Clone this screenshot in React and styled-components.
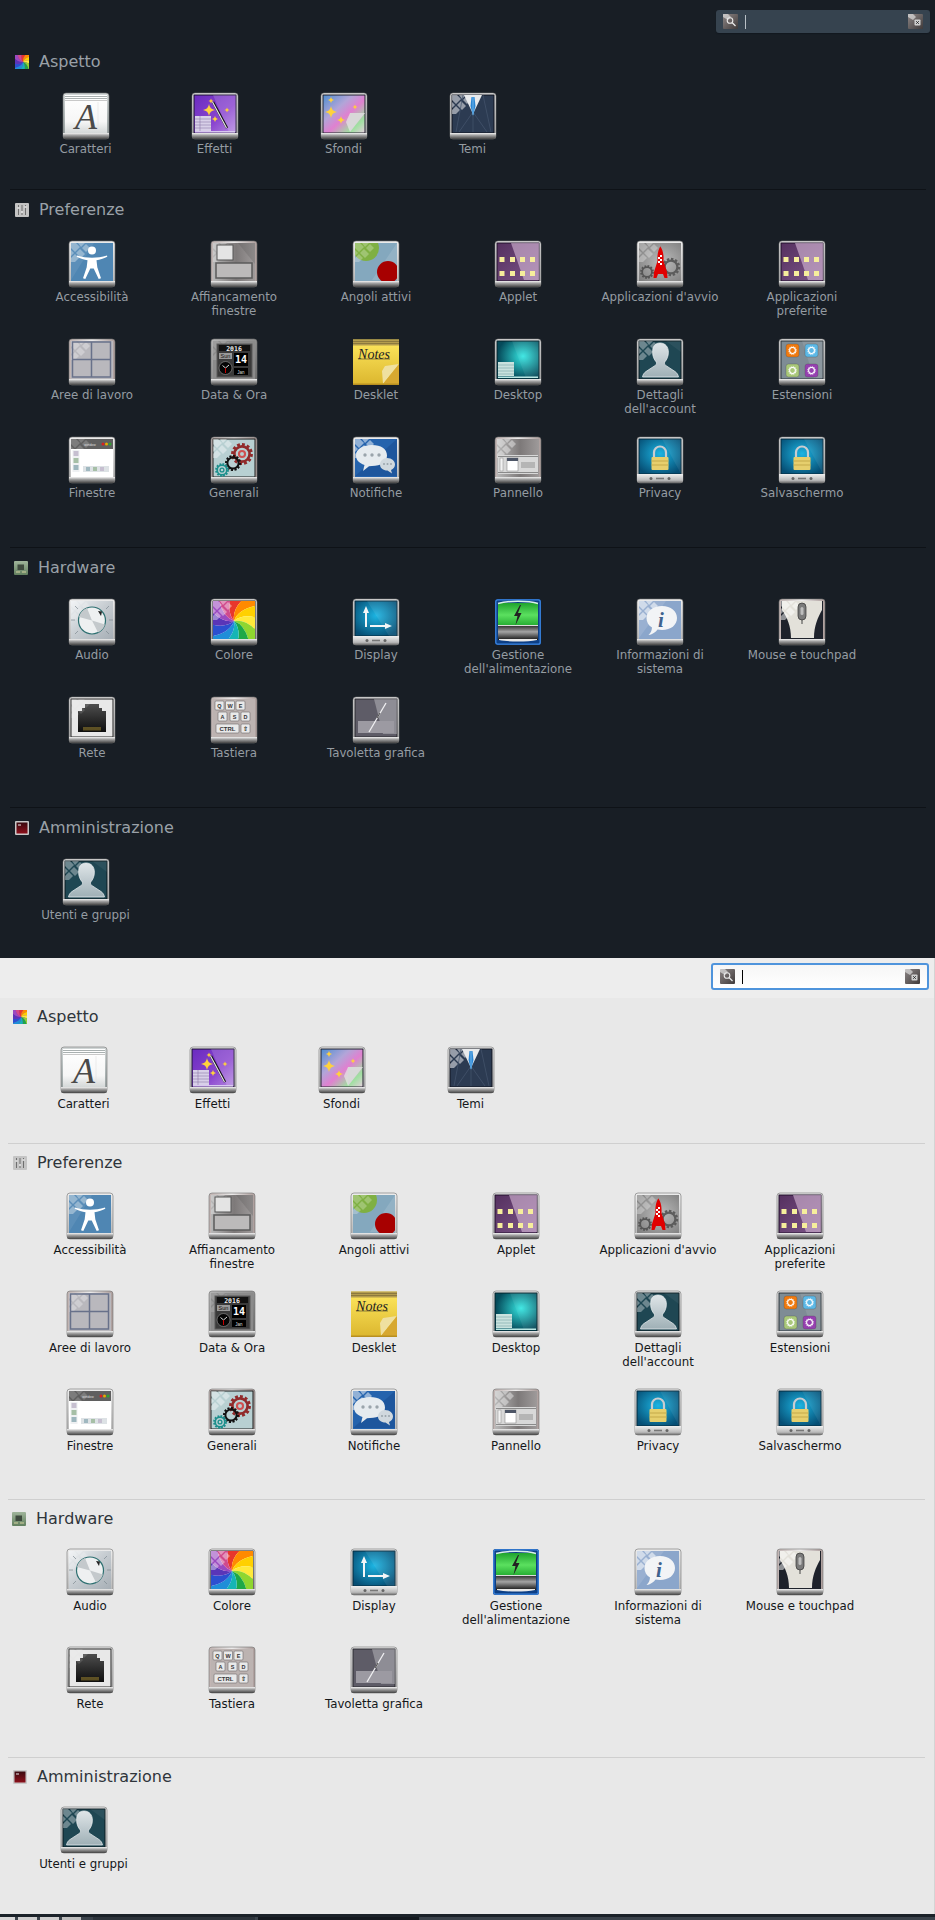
import React from 'react';
import styled, { createGlobalStyle } from 'styled-components';

const Global = createGlobalStyle`
  html, body { margin: 0; padding: 0; background: #e8e8e8; }
  body { font-family: "DejaVu Sans", sans-serif; }
`;

const Page = styled.div`
  width: 935px;
  height: 1920px;
  display: flex;
  flex-direction: column;
  overflow: hidden;
`;
const HiddenDefs = styled.svg`
  display: block;
  width: 0;
  height: 0;
`;
const Win = styled.section`
  height: ${p => p.$h}px;
  flex: none;
  display: flex;
  flex-direction: column;
  box-sizing: border-box;
  background: ${p => (p.$dark ? '#181e25' : '#e8e8e8')};
  border-right: ${p => (p.$dark ? 'none' : '1px solid #d4d4d4')};
`;
const Toolbar = styled.div`
  height: ${p => (p.$dark ? 42 : 40)}px;
  box-sizing: border-box;
  flex: none;
  display: flex;
  justify-content: flex-end;
  align-items: flex-start;
  padding: ${p => (p.$dark ? '10px 5px 0 0' : '5px 5px 0 0')};
  background: ${p => (p.$dark ? '#181e25' : '#ededed')};
`;
const Search = styled.div`
  box-sizing: border-box;
  width: ${p => (p.$dark ? 214 : 218)}px;
  height: ${p => (p.$dark ? 23 : 27)}px;
  display: flex;
  align-items: center;
  padding: 0 7px;
  gap: 7px;
  border-radius: 3px;
  background: ${p => (p.$dark ? '#36434f' : 'linear-gradient(#f6f6f6, #fff)')};
  border: ${p => (p.$dark ? 'none' : '2px solid #4f94dc')};
  box-shadow: ${p => (p.$dark ? '0 1px 1px #121820' : 'none')};
`;
const Caret = styled.span`
  width: 1px;
  height: 14px;
  background: ${p => (p.$dark ? '#b9c0c6' : '#000')};
  flex: none;
`;
const Spring = styled.span`
  flex: 1;
`;
const Section = styled.div`
  margin: 0 9px 0 ${p => (p.$dark ? 10 : 8)}px;
  padding-top: ${p => (p.$dark ? 10 : 9)}px;
  padding-bottom: ${p => p.$tail}px;
  border-top: ${p => (p.$first ? 'none' : `1px solid ${p.$dark ? '#0e1217' : '#cfcfcf'}`)};
`;
const Header = styled.div`
  height: 20px;
  display: flex;
  align-items: center;
  gap: 10px;
  padding-left: ${p => p.$left}px;
  margin-bottom: ${p => (p.$dark ? 20 : 19)}px;
`;
const Title = styled.h2`
  margin: 0;
  font-size: 16px;
  font-weight: 400;
  line-height: 20px;
  color: ${p => (p.$dark ? '#9aa1a8' : '#2f353b')};
`;
const Grid = styled.div`
  display: grid;
  grid-template-columns: repeat(6, ${p => p.$cell}px);
  grid-auto-rows: ${p => p.$row}px;
  padding-left: 11px;
`;
const Item = styled.div`
  display: flex;
  flex-direction: column;
  align-items: center;
`;
const IconBox = styled.svg`
  display: block;
  width: 48px;
  height: 48px;
  flex: none;
`;
const Small = styled.svg`
  display: block;
  width: ${p => p.$s}px;
  height: ${p => p.$s}px;
  flex: none;
`;
const Label = styled.div`
  margin-top: ${p => (p.$dark ? 2 : 3)}px;
  max-width: 122px;
  font-size: 11.8px;
  line-height: 14px;
  text-align: center;
  color: ${p => (p.$dark ? '#959ca2' : '#14171a')};
`;
const Panel = styled.footer`
  flex: 1;
  display: flex;
  align-items: flex-start;
  border-top: 3px solid #1b2229;
  background: #3b434b;
  gap: 3px;
`;
const Launcher = styled.span`
  width: ${p => p.$w}px;
  height: 3px;
  flex: none;
  margin-left: ${p => p.$l || 0}px;
  background: ${p => p.$c};
`;

const Defs = () => (
  <HiddenDefs aria-hidden="true">
    <defs>
      <linearGradient id="bezel" x1="0" y1="0" x2="0" y2="1">
        <stop offset="0" stopColor="#ececec" /><stop offset=".85" stopColor="#bcbcbc" /><stop offset="1" stopColor="#999" />
      </linearGradient>
      <linearGradient id="rose" x1="0" y1="0" x2="1" y2="0">
        <stop offset="0" stopColor="#bfb2b0" /><stop offset=".5" stopColor="#ecebeb" /><stop offset="1" stopColor="#ab9c9a" />
      </linearGradient>
      <linearGradient id="edge" x1="0" y1="0" x2="0" y2="1">
        <stop offset="0" stopColor="#d2d7d7" /><stop offset="1" stopColor="#8f9999" />
      </linearGradient>
      <linearGradient id="dim" x1="0" y1="0" x2="1" y2="1">
        <stop offset="0" stopColor="#b4b4b4" /><stop offset="1" stopColor="#6a6a6a" />
      </linearGradient>
      <linearGradient id="lip" x1="0" y1="0" x2="0" y2="1">
        <stop offset="0" stopColor="#f2f2f2" /><stop offset=".4" stopColor="#a0a0a0" /><stop offset="1" stopColor="#444" />
      </linearGradient>
      <linearGradient id="lipWide" x1="0" y1="0" x2="0" y2="1">
        <stop offset="0" stopColor="#f0f0f0" /><stop offset=".7" stopColor="#b9b9b9" /><stop offset="1" stopColor="#666" />
      </linearGradient>
      <linearGradient id="paper" x1="0" y1="0" x2="0" y2="1">
        <stop offset="0" stopColor="#fff" /><stop offset=".7" stopColor="#f6f6f6" /><stop offset="1" stopColor="#d4d8d8" />
      </linearGradient>
      <linearGradient id="purple" x1="0" y1="0" x2="1" y2="1">
        <stop offset="0" stopColor="#6a2bc0" /><stop offset=".6" stopColor="#8a45cf" /><stop offset="1" stopColor="#b58ae0" />
      </linearGradient>
      <linearGradient id="wall" x1="0" y1="0" x2="1" y2="1">
        <stop offset="0" stopColor="#4f8ed0" /><stop offset=".35" stopColor="#b2a5d8" /><stop offset=".55" stopColor="#e080d0" /><stop offset=".8" stopColor="#9fe0a0" /><stop offset="1" stopColor="#e8d0e0" />
      </linearGradient>
      <linearGradient id="steel" x1="0" y1="0" x2="1" y2="0">
        <stop offset="0" stopColor="#b8b8b8" /><stop offset=".55" stopColor="#7d7979" /><stop offset="1" stopColor="#9e9a9a" />
      </linearGradient>
      <radialGradient id="teal" cx=".62" cy=".4" r=".6">
        <stop offset="0" stopColor="#35e6e2" /><stop offset="1" stopColor="#054a5a" />
      </radialGradient>
      <radialGradient id="ocean" cx=".5" cy=".42" r=".65">
        <stop offset="0" stopColor="#1cb4e2" /><stop offset="1" stopColor="#064e74" />
      </radialGradient>
      <radialGradient id="ash" cx=".55" cy=".5" r=".7">
        <stop offset="0" stopColor="#bcbcbc" /><stop offset="1" stopColor="#808080" />
      </radialGradient>
      <linearGradient id="yellow" x1="0" y1="0" x2="0" y2="1">
        <stop offset="0" stopColor="#ffe85e" /><stop offset="1" stopColor="#dbb62e" />
      </linearGradient>
      <linearGradient id="silver" x1="0" y1="0" x2="1" y2="1">
        <stop offset="0" stopColor="#eef1f3" /><stop offset=".5" stopColor="#c5cbd0" /><stop offset="1" stopColor="#a7afb6" />
      </linearGradient>
      <linearGradient id="head" x1="0" y1="0" x2="0" y2="1">
        <stop offset="0" stopColor="#dfe5e8" /><stop offset="1" stopColor="#9fb0b6" />
      </linearGradient>
      <linearGradient id="ink" x1="0" y1="0" x2="0" y2="1">
        <stop offset="0" stopColor="#4e4e4e" /><stop offset="1" stopColor="#0e0e0e" />
      </linearGradient>
      <linearGradient id="green" x1="0" y1="0" x2="0" y2="1">
        <stop offset="0" stopColor="#1fa32e" /><stop offset=".5" stopColor="#5be05f" /><stop offset="1" stopColor="#1da52c" />
      </linearGradient>
      <linearGradient id="barrel" x1="0" y1="0" x2="0" y2="1">
        <stop offset="0" stopColor="#222" /><stop offset=".45" stopColor="#a4a4a4" /><stop offset="1" stopColor="#151515" />
      </linearGradient>
      <linearGradient id="plum" x1="0" y1="0" x2="1" y2="1">
        <stop offset="0" stopColor="#55305f" /><stop offset="1" stopColor="#7d5689" />
      </linearGradient>
      <linearGradient id="chip" x1="0" y1="0" x2="0" y2="1">
        <stop offset="0" stopColor="#9fb49a" /><stop offset="1" stopColor="#62805f" />
      </linearGradient>
      <linearGradient id="term" x1="0" y1="0" x2="0" y2="1">
        <stop offset="0" stopColor="#3a0a10" /><stop offset="1" stopColor="#8c0f1a" />
      </linearGradient>
      <linearGradient id="mini" x1="0" y1="0" x2="1" y2="1">
        <stop offset="0" stopColor="#8d8686" /><stop offset="1" stopColor="#3f3a3a" />
      </linearGradient>
      <clipPath id="scr"><rect x="3" y="3" width="42" height="38" /></clipPath>
      <clipPath id="hd"><rect width="14" height="14" /></clipPath>
    </defs>
  </HiddenDefs>
);

const Lattice = ({ o = 0.32, c = '#fff' }) => (
  <g fill={c} opacity={o}>
    <polygon points="3,3 8,3 12,7 7,12 3,8" />
    <polygon points="10,3 17,3 13,7" />
    <polygon points="14,8 18,4 22,8 18,12" />
    <polygon points="8,13 12,9 17,14 13,18" />
    <polygon points="3,10 6,13 3,16" />
    <polygon points="3,18 7,14 11,18 7,22 3,22" />
  </g>
);

const Frame = ({ bg, metal = 'url(#bezel)', border, lattice = true, o, lc, wide, children }) => (
  <>
    <rect x="1" y="1" width="46" height="46" rx="3" fill={metal} stroke="#6f6f6f" strokeWidth=".6" />
    <rect x="3" y="3" width="42" height={wide ? 35 : 38} fill={bg} stroke={border || 'none'} strokeWidth="1" />
    <g clipPath="url(#scr)">
      {lattice && <Lattice o={o} c={lc} />}
      {children}
    </g>
    {wide ? (
      <>
        <path d="M1 38h46v7a2 2 0 0 1-2 2H3a2 2 0 0 1-2-2z" fill="url(#lipWide)" />
        <circle cx="15" cy="42.5" r="1.5" fill="#666" /><circle cx="33" cy="42.5" r="1.5" fill="#666" />
        <rect x="20" y="41.7" width="8" height="1.6" fill="#777" />
      </>
    ) : (
      <path d="M1 41h46v4a2 2 0 0 1-2 2H3a2 2 0 0 1-2-2z" fill="url(#lip)" />
    )}
  </>
);

const Star = ({ x, y, r, c = '#ffd23c' }) => (
  <path d={`M${x} ${y - r}Q${x + r * 0.12} ${y - r * 0.12} ${x + r} ${y}Q${x + r * 0.12} ${y + r * 0.12} ${x} ${y + r}Q${x - r * 0.12} ${y + r * 0.12} ${x - r} ${y}Q${x - r * 0.12} ${y - r * 0.12} ${x} ${y - r}Z`} fill={c} />
);

const Gear = ({ x, y, r, c, inner }) => (
  <g fill="none">
    <circle cx={x} cy={y} r={r} stroke={c} strokeWidth={r * 0.3} strokeDasharray={`${r * 0.3} ${r * 0.22}`} />
    <circle cx={x} cy={y} r={r * 0.8} stroke={c} strokeWidth={r * 0.28} />
    {inner && <circle cx={x} cy={y} r={r * 0.32} stroke={inner} strokeWidth={r * 0.22} />}
  </g>
);

const Person = () => (
  <path d="M24 5c5.600 0 8.400 4.200 8.400 9.200 0 4.300-1.700 7.500-3.400 9.500-.9 1.100-.6 2.900.7 3.700l9.300 6.100c2 1.300 3.200 3.500 3.500 5.500H6.500c.3-2 1.500-4.200 3.500-5.500l9.300-6.100c1.300-.8 1.600-2.600.7-3.700-1.700-2-3.400-5.200-3.400-9.500C16.600 9.200 18.400 5 24 5z" fill="url(#head)" stroke="#eef2f3" strokeWidth=".7" />
);

const Lock = () => (
  <>
    <path d="M18 22v-5.500a6 6 0 0 1 12 0V22" fill="none" stroke="#c9ccd0" strokeWidth="2.200" />
    <rect x="15.500" y="21" width="17" height="13" rx="1" fill="#e6cf6d" />
    <path d="M15.500 25h17M15.500 29h17" stroke="#c4a94a" strokeWidth="1" />
  </>
);

const wheelColors = ['#e8372c', '#ff8a00', '#ffd000', '#ffe93a', '#8fd630', '#1ea848', '#15b5b5', '#1f8ed8', '#2c4fd0', '#5a35b8', '#9a4ac0', '#d04a8c'];
const Wheel = ({ cx, cy, r }) => (
  <g>
    {wheelColors.map((c, i) => {
      const a = (i / 12) * Math.PI * 2 - Math.PI / 2;
      const b = ((i + 1) / 12) * Math.PI * 2 - Math.PI / 2;
      const p = t => `${(cx + r * Math.cos(t)).toFixed(1)} ${(cy + r * Math.sin(t)).toFixed(1)}`;
      const q = t => `${(cx + r * 0.45 * Math.cos(t - 0.7)).toFixed(1)} ${(cy + r * 0.45 * Math.sin(t - 0.7)).toFixed(1)}`;
      return <path key={c} d={`M${cx} ${cy}Q${q(a)} ${p(a)}L${p(b)}Q${q(b)} ${cx} ${cy}Z`} fill={c} />;
    })}
  </g>
);

const T = styled.text`
  font-family: ${p => p.$f || '"Liberation Sans", sans-serif'};
  font-size: ${p => p.$s}px;
  font-weight: ${p => p.$w || 400};
  font-style: ${p => (p.$i ? 'italic' : 'normal')};
  fill: ${p => p.$c || '#000'};
  text-anchor: middle;
`;

const Key = ({ x, y, w = 9, t, s = 5.500 }) => (
  <>
    <rect x={x} y={y} width={w} height="9" rx="1" fill="#e9e9e9" stroke="#6c6868" strokeWidth=".6" />
    <T x={x + w / 2} y={y + 6.800} $s={s} $w={700} $c="#333">{t}</T>
  </>
);

const Stars = ({ xs = [8, 18.500, 28.500, 38.500] }) => (
  <g fill="#f6ee9c">
    {[19.500, 33.500].flatMap(y => xs.map(x => <rect key={`${x}-${y}`} x={x - 2.500} y={y - 2.500} width="5" height="5" />))}
  </g>
);

const icons = {
  caratteri: () => (
    <Frame bg="url(#paper)" lattice={false} metal="url(#edge)">
      <path d="M3 4.500h42M3 6.500h42" stroke="#a9b0b0" strokeWidth="1" />
      <path d="M3 8.500h42" stroke="#c8c8c8" strokeWidth="1" />
      <path d="M10 36.500h28M36 10v28" stroke="#e0e0e0" strokeWidth=".6" />
      <T x="24" y="37" $s={36} $i $f='"Liberation Serif", serif' $c="#4a4a4a">A</T>
    </Frame>
  ),
  effetti: () => (
    <Frame bg="url(#purple)" border="#1a1030" lattice={false}>
      <polygon points="22,3 45,3 45,40 38,40" fill="#fff" opacity=".16" />
      <Star x={18} y={18} r={6} /><Star x={20} y={9} r={2.500} /><Star x={36} y={18} r={2.500} /><Star x={24} y={27} r={3} />
      <path d="M22 10l14 26" stroke="#111" strokeWidth="2.500" /><path d="M21.500 10l14 26" stroke="#e5e5e5" strokeWidth="1.200" />
      <rect x="4" y="24" width="16" height="15" fill="#d8d0e8" />
      <path d="M4 27h16M4 30h16M4 33h16M4 36h16M9 24v15" stroke="#8d7aa8" strokeWidth=".6" />
      <rect x="4" y="39" width="40" height="1.500" fill="#d8c8f0" />
    </Frame>
  ),
  sfondi: () => (
    <Frame bg="url(#wall)" border="#20202c" lattice={false}>
      <Star x={11} y={20} r={6} /><Star x={11} y={8} r={3} /><Star x={35} y={15} r={2.500} /><Star x={21} y={28} r={4} />
      <polygon points="30,21 45,21 30,40" fill="#d8d8d8" />
      <polygon points="30,21 30,40 26,30" fill="#f0f0f0" opacity=".6" />
    </Frame>
  ),
  temi: () => (
    <Frame bg="#2c3b52" border="#10151e" o={0.5}>
      <path d="M14 3l-7 37M34 3l8 37M24 20v20M10 40l14-20 14 20" stroke="#46566e" strokeWidth=".7" fill="none" />
      <polygon points="15,3 33,3 24,22" fill="#e8eaec" />
      <polygon points="22.500,5 25.500,5 26.500,14 24,24 21.500,14" fill="#2a86d4" />
      <path d="M24 5v18" stroke="#8ccaf5" strokeWidth=".7" />
    </Frame>
  ),
  accessibilita: () => (
    <Frame bg="#4f86b3" o={0.35}>
      <polygon points="3,40 26,3 3,3" fill="#fff" opacity=".08" />
      <circle cx="24" cy="10.500" r="4" fill="#fff" />
      <path d="M9 15.500c5 1.500 10 2.200 15 2.200s10-.7 15-2.200l.3 1.300c-3.800 2-7.500 3-10.800 3.500l.8 7 3.700 11-2.300.7-5-10.500h-3.400l-5 10.500-2.300-.7 3.700-11 .8-7c-3.300-.5-7-1.500-10.800-3.500z" fill="#fff" />
    </Frame>
  ),
  affiancamento: () => (
    <Frame bg="url(#steel)" metal="url(#rose)" o={0.25}>
      <polygon points="28,3 45,3 45,24" fill="#444" opacity=".2" />
      <rect x="7" y="5" width="16" height="15" fill="#e4e4e4" stroke="#555" strokeWidth="1" />
      <rect x="6" y="23" width="36" height="15" fill="#bcbaba" stroke="#5b5b5b" strokeWidth="1.500" />
    </Frame>
  ),
  angoli: () => (
    <Frame bg="#84a8be" lattice={false}>
      <polygon points="20,40 45,3 45,40" fill="#fff" opacity=".12" />
      <circle cx="14" cy="8" r="13" fill="#7fb043" />
      <Lattice o={0.25} />
      <circle cx="36" cy="32" r="11" fill="#a70000" />
    </Frame>
  ),
  applet: () => (
    <Frame bg="url(#plum)" border="#20102a" lattice={false}>
      <polygon points="17,3 45,3 45,40 30,40" fill="#d8bdd8" opacity=".6" />
      <Stars />
    </Frame>
  ),
  avvio: () => (
    <Frame bg="url(#ash)" o={0.3}>
      <Gear x={11} y={32} r={6} c="#555" />
      <Gear x={35} y={27} r={8} c="#5c5c5c" />
      <path d="M24 6c2.500 3 4 8 3.500 15l3.500 11 .5 6h-3l-1.500-4h-5l-1.500 4h-3l.5-6 3.500-11c-.5-7 1-12 3-15z" fill="#e00000" />
      <g fill="#fff"><rect x="22" y="17" width="2" height="2" /><rect x="24" y="19" width="2" height="2" /><rect x="22" y="21" width="2" height="2" /><rect x="24" y="15" width="2" height="2" /><rect x="24" y="23" width="2" height="2" /></g>
    </Frame>
  ),
  aree: () => (
    <Frame bg="#b9b8bd" metal="url(#rose)" o={0.3}>
      <rect x="4.500" y="4" width="38" height="35" fill="none" stroke="#68718a" strokeWidth="1.500" />
      <path d="M23.500 4v35M4.500 21.500h38" stroke="#68718a" strokeWidth="1.500" />
    </Frame>
  ),
  data: () => (
    <Frame bg="#8b8b8b" o={0.15} metal="url(#dim)">
      <rect x="7" y="6" width="35" height="33" fill="#3a3a3a" stroke="#5a5a5a" />
      <rect x="9" y="7" width="31" height="6" fill="#111" />
      <T x="24" y="12.500" $s={6.500} $w={700} $c="#eee" $f='"DejaVu Sans Mono", monospace'>2016</T>
      <rect x="9" y="15" width="13" height="6" fill="#999" />
      <T x="15.500" y="20" $s={5.500} $c="#111">Sun</T>
      <rect x="24" y="15" width="14" height="13" fill="#000" />
      <T x="31" y="25" $s={10} $w={700} $c="#fff" $f='"DejaVu Sans Mono", monospace'>14</T>
      <rect x="24" y="30" width="14" height="7" fill="#000" />
      <T x="31" y="35.500" $s={4.500} $c="#ddd">Jan</T>
      <circle cx="15.500" cy="30" r="6.500" fill="#050505" stroke="#aaa" strokeWidth=".5" />
      <path d="M15.500 30l-3-2.500M15.500 30l3.500-3" stroke="#eee" strokeWidth=".9" />
      <path d="M15.500 30v5" stroke="#d00" strokeWidth=".9" />
    </Frame>
  ),
  desklet: () => (
    <>
      <rect x="1" y="1.500" width="46" height="45.500" fill="url(#yellow)" />
      <rect x="1" y="1.500" width="46" height="6" fill="#a78f4c" opacity=".85" />
      <path d="M1 3.500h46M1 5.500h46" stroke="#7b6a38" strokeWidth=".7" />
      <T x="22" y="21" $s={14} $i $f='"Liberation Serif", serif' $c="#222">Notes</T>
      <path d="M6 21h32" stroke="#222" strokeWidth=".5" />
      <polygon points="47,26 31,46 30,33 33,28" fill="#efe0a0" />
      <polygon points="31,46 47,26 47,47" fill="#d7a830" />
      <rect x="1" y="45.500" width="46" height="1.500" fill="#b88f20" />
    </>
  ),
  desktop: () => (
    <Frame bg="url(#teal)" border="#052028" lattice={false}>
      <polygon points="18,3 45,3 45,40 32,40" fill="#fff" opacity=".07" />
      <rect x="4" y="24" width="16" height="14" fill="#c9e2de" />
      <path d="M4 27h16M4 30h16M4 33h16M4 36h16" stroke="#75a6a6" strokeWidth=".6" />
      <rect x="4" y="38.500" width="40" height="1.500" fill="#b9e8e4" />
    </Frame>
  ),
  dettagli: () => (
    <Frame bg="#1f4753" border="#0b1a20" o={0.35}>
      <polygon points="30,3 45,3 45,14" fill="#fff" opacity=".06" />
      <Person />
    </Frame>
  ),
  estensioni: () => (
    <Frame bg="#7e8c95" border="#2a3238" lattice={false}>
      <polygon points="24,3 45,3 45,40 36,40" fill="#fff" opacity=".1" />
      {[[8, 6, '#ef7a10'], [27, 6, '#5cb8e6'], [8, 26, '#a9c87a'], [27, 26, '#9640b0']].map(([x, y, c]) => (
        <g key={c}>
          <rect x={x} y={y} width="13" height="13" rx="2.500" fill={c} stroke="#444" strokeWidth=".3" />
          <Gear x={x + 6.500} y={y + 6.500} r={3.600} c="#fff" />
        </g>
      ))}
    </Frame>
  ),
  finestre: () => (
    <Frame bg="#fff" lattice={false}>
      <rect x="3" y="3" width="42" height="10" fill="#5f5f5f" />
      <Lattice o={0.18} />
      <rect x="4" y="13" width="40" height="27" fill="#fff" />
      <T x="22" y="9.500" $s={3.500} $c="#ddd">window</T>
      <circle cx="35" cy="8" r="1.500" fill="#d62020" /><circle cx="38.500" cy="8" r="1.500" fill="#e8a800" /><circle cx="42" cy="8" r="1.500" fill="#30a030" />
      <rect x="4.500" y="14" width="7" height="22" fill="#eef0f2" />
      <rect x="5.500" y="15" width="5" height="5" fill="#c6bfd0" /><rect x="5.500" y="22" width="5" height="5" fill="#a6bfa6" /><rect x="5.500" y="29" width="5" height="5" fill="#9db6bd" />
      <rect x="15" y="30" width="26" height="6" fill="#dde2e5" />
      <rect x="18" y="31" width="4" height="4" fill="#a0b8c0" /><rect x="25" y="31" width="4" height="4" fill="#a6bfa6" /><rect x="32" y="31" width="4" height="4" fill="#c6bfd0" />
    </Frame>
  ),
  generali: () => (
    <Frame bg="#b8d0d2" border="#1c1c1c" o={0.4} metal="url(#rose)">
      <Gear x={32} y={18} r={9.500} c="#912b2b" inner="#d05050" />
      <Gear x={23} y={27} r={7} c="#111" />
      <Gear x={12} y={34} r={6} c="#1d8f8c" inner="#1d8f8c" />
    </Frame>
  ),
  notifiche: () => (
    <Frame bg="#2563ad" o={0.5}>
      <polygon points="3,40 45,3 45,40" fill="#1a4f93" opacity=".6" />
      <path d="M20 9c9 0 15 4 15 10.500S29 30 20 30l-3 .3L11 35l1.500-6C7 27 4 24 4 19.500 4 13 11 9 20 9z" fill="#e6ebef" />
      <path d="M35 22c5 0 8 3 8 6.500 0 2.500-1.500 4.500-4 5.500l1 3.500-4.500-3c-4.500 0-7.500-2.500-7.500-6 0-3.500 3-6.500 7-6.500z" fill="#d0d8de" />
      <g fill="#9aa4ab"><circle cx="13" cy="19" r="1.700" /><circle cx="20" cy="19" r="1.700" /><circle cx="27" cy="19" r="1.700" /><circle cx="32" cy="28" r="1" /><circle cx="35.500" cy="28" r="1" /><circle cx="39" cy="28" r="1" /></g>
    </Frame>
  ),
  pannello: () => (
    <Frame bg="url(#steel)" metal="url(#rose)" o={0.4}>
      <rect x="4" y="19" width="40" height="19" fill="#d8d8d8" />
      <path d="M4 20.500h40M4 36.500h40" stroke="#8a8a8a" strokeWidth="1" />
      <rect x="6" y="22" width="3" height="13" fill="#f2f2f2" stroke="#888" strokeWidth=".5" />
      <rect x="13" y="22" width="11" height="13" fill="#fff" stroke="#777" strokeWidth=".5" />
      <rect x="13" y="22" width="11" height="3" fill="#4d5566" />
      <rect x="27" y="26" width="14" height="6" fill="#b5b5b5" />
    </Frame>
  ),
  privacy: () => (
    <Frame bg="url(#ocean)" border="#072a3c" lattice={false} wide>
      <polygon points="26,3 45,3 45,38" fill="#fff" opacity=".07" />
      <Lock />
    </Frame>
  ),
  audio: () => (
    <Frame bg="url(#silver)" o={0.2}>
      <path d="M7 8l3 3M41 8l-3 3M7 36l3-3M41 36l-3-3M3 22h4M41 22h4" stroke="#7e8a90" strokeWidth=".7" />
      <circle cx="24" cy="22.500" r="13.500" fill="#eef0f1" stroke="#2d6f70" strokeWidth="1.200" />
      <path d="M24 22.500L11 19a13 13 0 0 1 8-9zM24 22.500l13 4a13 13 0 0 1-7 8z" fill="#c4c9cc" />
      <polygon points="30,13 34,13.500 33,18" fill="#222" />
    </Frame>
  ),
  colore: () => (
    <Frame bg="#fff" border="#1a1a1a" lattice={false} metal="url(#bezel)">
      <Wheel cx={24} cy={23} r={32} />
      <Lattice o={0.4} />
    </Frame>
  ),
  display: () => (
    <Frame bg="url(#ocean)" border="#072a3c" lattice={false} wide>
      <polygon points="15,3 45,3 45,38 37,38" fill="#fff" opacity=".08" />
      <path d="M14 8l3 7h-2v14h-2V15h-2z" fill="#f4f6f7" />
      <path d="M18 27h15v-2l7 3-7 3v-2H18z" fill="#f4f6f7" />
    </Frame>
  ),
  gestione: () => (
    <>
      <rect x="1" y="1" width="46" height="46" rx="2.500" fill="#0d3f85" />
      <rect x="1.800" y="1.800" width="44.400" height="44.400" rx="2" fill="none" stroke="#3c86e0" strokeWidth="1.300" />
      <rect x="4" y="5" width="40" height="24" rx="1" fill="url(#green)" />
      <path d="M4 5.500c10-3 30-3 40 0" stroke="#d8f0e8" strokeWidth="1.500" fill="none" />
      <rect x="4" y="27" width="40" height="15" fill="url(#barrel)" />
      <path d="M4 27.500h40" stroke="#ddd" />
      <path d="M5 42c10 2 28 2 38 0v-1H5z" fill="#e8e8e8" />
      <path d="M26 7l-6 11h3.500l-2 9 6-12h-3.500l3-8z" fill="#222" />
    </>
  ),
  informazioni: () => (
    <Frame bg="#8ba6cb" o={0.55}>
      <polygon points="3,40 30,3 3,3" fill="#fff" opacity=".12" />
      <path d="M26 8c9 0 15 5 15 12s-6 12-15 12c-1.500 0-3-.2-4.400-.5C20 33.500 17 36.500 12.500 37c2-1.700 3.200-4 3.500-7.500-3.600-2.200-5.500-5.600-5.500-9.500C10.500 13 17 8 26 8z" fill="#f2f4f6" />
      <T x="25" y="29" $s={21} $w={700} $i $f='"Liberation Serif", serif' $c="#3f628e">i</T>
    </Frame>
  ),
  mouse: () => (
    <Frame bg="#1e222b" metal="url(#rose)" lattice={false}>
      <path d="M4 3h40v9c-4 7-8 16-8 28H13C13 28 9 19 4 12z" fill="#e3e1da" />
      <Lattice o={0.5} c="#fff" />
      <rect x="20" y="5" width="8" height="17" rx="4" fill="#7a7a7a" stroke="#333" strokeWidth=".7" />
      <rect x="22.500" y="9" width="3" height="8" rx="1.500" fill="#bdbdbd" />
      <path d="M24 22v4" stroke="#444" />
    </Frame>
  ),
  rete: () => (
    <Frame bg="#e8e8e8" border="#222" lattice={false}>
      <path d="M10 15h4v-3h3V8h14v4h3v3h4v21H10z" fill="url(#ink)" />
      <Lattice o={0.12} />
      <path d="M16 31v3.500M18 31v3.500M20 31v3.500M22 31v3.500M24 31v3.500M26 31v3.500M28 31v3.500M30 31v3.500M32 31v3.500" stroke="#a48a30" strokeWidth="1" />
    </Frame>
  ),
  tastiera: () => (
    <Frame bg="#bcb3b1" metal="url(#rose)" lattice={false}>
      <Key x={5} y={5} t="Q" /><Key x={15.500} y={5} t="W" /><Key x={26} y={5} t="E" />
      <Key x={8} y={16} t="A" /><Key x={20} y={16} t="S" /><Key x={31} y={16} t="D" />
      <Key x={6} y={28} w={23} t="CTRL" s={6} /><Key x={31} y={28} t="⇧" />
    </Frame>
  ),
  tavoletta: () => (
    <Frame bg="#5e5c67" lattice={false} border="#2b2a30">
      <polygon points="22,3 45,3 45,38 31,38" fill="#fff" opacity=".3" />
      <rect x="6" y="25" width="36" height="12" fill="#9c9aa2" />
      <path d="M34 7L17 36" stroke="#f0f0f2" strokeWidth="1.300" />
      <path d="M28 17l-3 5" stroke="#555" strokeWidth="1.200" />
    </Frame>
  ),
};
icons.preferite = icons.applet;
icons.salvaschermo = icons.privacy;
icons.utenti = icons.dettagli;

const Glyph = ({ name }) => {
  const Draw = icons[name];
  return <IconBox viewBox="0 0 48 48"><Draw /></IconBox>;
};

const headIcons = {
  aspetto: (
    <>
      <rect width="14" height="14" fill="#8a2ab5" />
      <g clipPath="url(#hd)"><Wheel cx={8} cy={7} r={12} /></g>
    </>
  ),
  preferenze: (
    <>
      <rect width="14" height="14" rx="1" fill="#c4c4c4" />
      <path d="M3.500 2v10M7 2v10M10.500 2v10" stroke="#6f6f6f" strokeWidth="1" />
      <path d="M2.500 5h2M6 9h2M9.500 4h2" stroke="#f0f0f0" strokeWidth="1.400" />
    </>
  ),
  hardware: (
    <>
      <rect width="14" height="14" rx="1" fill="url(#chip)" />
      <rect x="3.500" y="3.500" width="6.500" height="5.500" fill="#3e4a3e" />
      <path d="M2 11h4M8 11h4" stroke="#d6d2a0" strokeWidth="1" />
    </>
  ),
  admin: (
    <>
      <rect width="14" height="14" rx="1" fill="#c8c8c8" />
      <rect x="1.500" y="1.500" width="11" height="11" fill="url(#term)" />
      <path d="M3 4h3" stroke="#eee" strokeWidth="1" />
    </>
  ),
};

const MiniFind = () => (
  <Small $s={15} viewBox="0 0 15 15">
    <rect width="15" height="15" rx="1" fill="url(#mini)" />
    <polygon points="0,0 5,0 8,3 5,6 0,3" fill="#ddd" opacity=".7" />
    <circle cx="7" cy="6.500" r="2.800" fill="none" stroke="#eaeaea" strokeWidth="1.100" />
    <path d="M9 8.500l3.500 3.500" stroke="#eaeaea" strokeWidth="1.300" />
  </Small>
);
const MiniClear = () => (
  <Small $s={15} viewBox="0 0 15 15">
    <rect width="15" height="15" rx="1" fill="url(#mini)" />
    <polygon points="0,0 5,0 8,3 5,6 0,3" fill="#ddd" opacity=".7" />
    <rect x="6.500" y="5.500" width="6" height="6" rx=".8" fill="#cfcfcf" />
    <path d="M8.200 7.200l2.600 2.600M10.800 7.200l-2.600 2.600" stroke="#222" strokeWidth=".9" />
  </Small>
);

const SECTIONS = [
  { title: 'Aspetto', icon: 'aspetto', cell: 129, row: 97, tail: 0, nudge: 0, items: [['Caratteri', 'caratteri'], ['Effetti', 'effetti'], ['Sfondi', 'sfondi'], ['Temi', 'temi']] },
  {
    title: 'Preferenze', icon: 'preferenze', cell: 142, row: 98, tail: 13, nudge: 0,
    items: [
      ['Accessibilità', 'accessibilita'], ['Affiancamento finestre', 'affiancamento'], ['Angoli attivi', 'angoli'], ['Applet', 'applet'], ["Applicazioni d'avvio", 'avvio'], ['Applicazioni preferite', 'preferite'],
      ['Aree di lavoro', 'aree'], ['Data & Ora', 'data'], ['Desklet', 'desklet'], ['Desktop', 'desktop'], ["Dettagli dell'account", 'dettagli'], ['Estensioni', 'estensioni'],
      ['Finestre', 'finestre'], ['Generali', 'generali'], ['Notifiche', 'notifiche'], ['Pannello', 'pannello'], ['Privacy', 'privacy'], ['Salvaschermo', 'salvaschermo'],
    ],
  },
  {
    title: 'Hardware', icon: 'hardware', cell: 142, row: 98, tail: 13, nudge: 1,
    items: [
      ['Audio', 'audio'], ['Colore', 'colore'], ['Display', 'display'], ["Gestione dell'alimentazione", 'gestione'], ['Informazioni di sistema', 'informazioni'], ['Mouse e touchpad', 'mouse'],
      ['Rete', 'rete'], ['Tastiera', 'tastiera'], ['Tavoletta grafica', 'tavoletta'],
    ],
  },
  { title: 'Amministrazione', icon: 'admin', cell: 129, row: 98, tail: 0, nudge: 0, items: [['Utenti e gruppi', 'utenti']] },
];

const SettingsWindow = ({ dark, height }) => (
  <Win $dark={dark} $h={height}>
    <Toolbar $dark={dark}>
      <Search $dark={dark}>
        <MiniFind />
        <Caret $dark={dark} />
        <Spring />
        <MiniClear />
      </Search>
    </Toolbar>
    {SECTIONS.map((s, i) => (
      <Section key={s.title} $dark={dark} $first={i === 0} $tail={s.tail}>
        <Header $dark={dark} $left={5 - s.nudge}>
          <Small $s={14} viewBox="0 0 14 14">{headIcons[s.icon]}</Small>
          <Title $dark={dark}>{s.title}</Title>
        </Header>
        <Grid $cell={s.cell} $row={s.row}>
          {s.items.map(([label, icon]) => (
            <Item key={label}>
              <Glyph name={icon} />
              <Label $dark={dark}>{label}</Label>
            </Item>
          ))}
        </Grid>
      </Section>
    ))}
  </Win>
);

export default function App() {
  return (
    <Page>
      <Global />
      <Defs />
      <SettingsWindow dark height={958} />
      <SettingsWindow height={956} />
      <Panel>
        <Launcher $w={15} $c="#d8d8d8" />
        <Launcher $w={19} $c="#cfcfcf" />
        <Launcher $w={19} $c="#cfcfcf" />
        <Launcher $w={19} $c="#bdbdbd" />
        <Launcher $w={162} $l={9} $c="#2d343b" />
        <Launcher $w={161} $c="#14191f" />
      </Panel>
    </Page>
  );
}
